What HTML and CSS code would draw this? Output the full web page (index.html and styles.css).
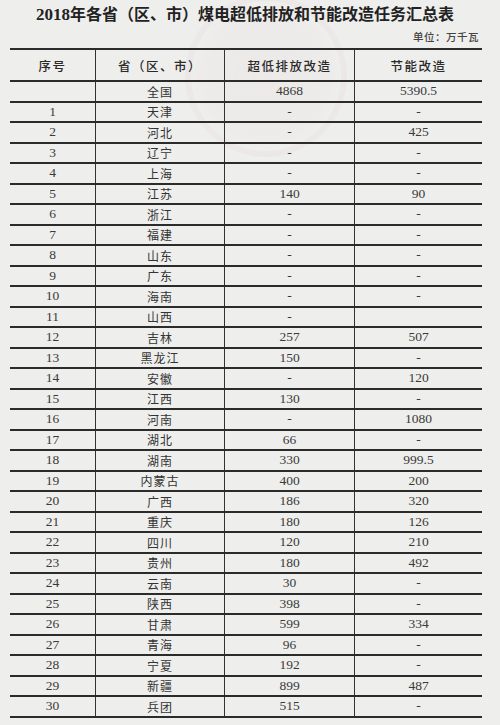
FILE: index.html
```html
<!DOCTYPE html>
<html lang="zh">
<head>
<meta charset="utf-8">
<link rel="stylesheet" href="styles.css">
</head>
<body>
<div class="page">
  <div class="stamp"></div>
  <h1 class="title"><span class="num">2018</span>年各省（区、市）煤电超低排放和节能改造任务汇总表</h1>
  <div class="unit">单位：万千瓦</div>
  <div class="table">
    <div class="row head"><div class="c">序号</div><div class="c">省（区、市）</div><div class="c">超低排放改造</div><div class="c">节能改造</div></div>
    <div class="row"><div class="c n"></div><div class="c">全国</div><div class="c n">4868</div><div class="c n">5390.5</div></div>
    <div class="row"><div class="c n">1</div><div class="c">天津</div><div class="c n">-</div><div class="c n">-</div></div>
    <div class="row"><div class="c n">2</div><div class="c">河北</div><div class="c n">-</div><div class="c n">425</div></div>
    <div class="row"><div class="c n">3</div><div class="c">辽宁</div><div class="c n">-</div><div class="c n">-</div></div>
    <div class="row"><div class="c n">4</div><div class="c">上海</div><div class="c n">-</div><div class="c n">-</div></div>
    <div class="row"><div class="c n">5</div><div class="c">江苏</div><div class="c n">140</div><div class="c n">90</div></div>
    <div class="row"><div class="c n">6</div><div class="c">浙江</div><div class="c n">-</div><div class="c n">-</div></div>
    <div class="row"><div class="c n">7</div><div class="c">福建</div><div class="c n">-</div><div class="c n">-</div></div>
    <div class="row"><div class="c n">8</div><div class="c">山东</div><div class="c n">-</div><div class="c n">-</div></div>
    <div class="row"><div class="c n">9</div><div class="c">广东</div><div class="c n">-</div><div class="c n">-</div></div>
    <div class="row"><div class="c n">10</div><div class="c">海南</div><div class="c n">-</div><div class="c n">-</div></div>
    <div class="row"><div class="c n">11</div><div class="c">山西</div><div class="c n">-</div><div class="c n"></div></div>
    <div class="row"><div class="c n">12</div><div class="c">吉林</div><div class="c n">257</div><div class="c n">507</div></div>
    <div class="row"><div class="c n">13</div><div class="c">黑龙江</div><div class="c n">150</div><div class="c n">-</div></div>
    <div class="row"><div class="c n">14</div><div class="c">安徽</div><div class="c n">-</div><div class="c n">120</div></div>
    <div class="row"><div class="c n">15</div><div class="c">江西</div><div class="c n">130</div><div class="c n">-</div></div>
    <div class="row"><div class="c n">16</div><div class="c">河南</div><div class="c n">-</div><div class="c n">1080</div></div>
    <div class="row"><div class="c n">17</div><div class="c">湖北</div><div class="c n">66</div><div class="c n">-</div></div>
    <div class="row"><div class="c n">18</div><div class="c">湖南</div><div class="c n">330</div><div class="c n">999.5</div></div>
    <div class="row"><div class="c n">19</div><div class="c">内蒙古</div><div class="c n">400</div><div class="c n">200</div></div>
    <div class="row"><div class="c n">20</div><div class="c">广西</div><div class="c n">186</div><div class="c n">320</div></div>
    <div class="row"><div class="c n">21</div><div class="c">重庆</div><div class="c n">180</div><div class="c n">126</div></div>
    <div class="row"><div class="c n">22</div><div class="c">四川</div><div class="c n">120</div><div class="c n">210</div></div>
    <div class="row"><div class="c n">23</div><div class="c">贵州</div><div class="c n">180</div><div class="c n">492</div></div>
    <div class="row"><div class="c n">24</div><div class="c">云南</div><div class="c n">30</div><div class="c n">-</div></div>
    <div class="row"><div class="c n">25</div><div class="c">陕西</div><div class="c n">398</div><div class="c n">-</div></div>
    <div class="row"><div class="c n">26</div><div class="c">甘肃</div><div class="c n">599</div><div class="c n">334</div></div>
    <div class="row"><div class="c n">27</div><div class="c">青海</div><div class="c n">96</div><div class="c n">-</div></div>
    <div class="row"><div class="c n">28</div><div class="c">宁夏</div><div class="c n">192</div><div class="c n">-</div></div>
    <div class="row"><div class="c n">29</div><div class="c">新疆</div><div class="c n">899</div><div class="c n">487</div></div>
    <div class="row"><div class="c n">30</div><div class="c">兵团</div><div class="c n">515</div><div class="c n">-</div></div>
  </div>
</div>
</body>
</html>
```
FILE: styles.css
```css
html, body {
  margin: 0;
  padding: 0;
  background: #eeeeec;
}
.page {
  position: relative;
  width: 500px;
  height: 725px;
  overflow: hidden;
  color: #2a2a2a;
  font-family: "Noto Sans CJK SC", "Noto Sans", sans-serif;
}
.stamp {
  position: absolute;
  left: 185px;
  top: -5px;
  width: 150px;
  height: 150px;
  border-radius: 50%;
  border: 6px solid rgba(205, 140, 140, 0.05);
  background: radial-gradient(circle, rgba(215, 160, 160, 0.05) 0%, rgba(215, 160, 160, 0.025) 60%, rgba(215,160,160,0) 70%);
}
.title {
  position: relative;
  margin: 0;
  padding: 3px 10px 0 0;
  font-size: 16px;
  line-height: 20px;
  font-weight: 700;
  text-align: center;
  color: #222;
}
.title .num {
  font-family: "Liberation Serif", serif;
  font-size: 17px;
}
.unit {
  position: relative;
  margin-top: 5px;
  padding-right: 21px;
  text-align: right;
  font-size: 10.5px;
  line-height: 14px;
  font-weight: 500;
  color: #444;
  letter-spacing: 0.5px;
}
.table {
  position: relative;
  margin: 4px 0 0 10px;
  width: 472px;
}
.row {
  display: grid;
  grid-template-columns: 86px 129px 130px 127px;
  height: 20.5px;
  box-sizing: border-box;
  border-bottom: 2px solid #2b2b2b;
}
.row.head {
  height: 34px;
  border-top: 2px solid #2b2b2b;
}
.c {
  display: flex;
  align-items: center;
  justify-content: center;
  border-right: 1.5px solid #333;
  font-size: 12px;
  letter-spacing: 1px;
  color: #333;
}
.c:last-child {
  border-right: none;
}
.head .c {
  font-size: 12.5px;
  font-weight: 500;
  letter-spacing: 1.5px;
  color: #2a2a2a;
}
.c.n {
  font-family: "Liberation Serif", serif;
  font-size: 13.5px;
  letter-spacing: 0;
  color: #3a3a3a;
}
```
